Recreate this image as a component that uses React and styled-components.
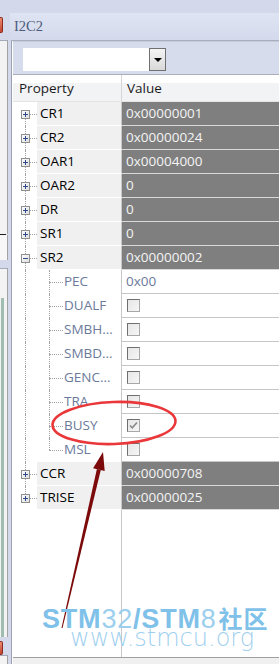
import React from "react";
import styled, { createGlobalStyle, css } from "styled-components";

const GlobalStyle = createGlobalStyle`
  *, *::before, *::after { box-sizing: border-box; }
  html, body { margin: 0; padding: 0; background: #d3d9ea; }
  body { font-family: "Open Sans", "Noto Sans", sans-serif; }
`;

const registers = [
  { name: "CR1", value: "0x00000001" },
  { name: "CR2", value: "0x00000024" },
  { name: "OAR1", value: "0x00004000" },
  { name: "OAR2", value: "0" },
  { name: "DR", value: "0" },
  { name: "SR1", value: "0" },
  {
    name: "SR2",
    value: "0x00000002",
    open: true,
    fields: [
      { name: "PEC", value: "0x00" },
      { name: "DUALF", check: false },
      { name: "SMBH…", check: false },
      { name: "SMBD…", check: false },
      { name: "GENC…", check: false },
      { name: "TRA", check: false },
      { name: "BUSY", check: true },
      { name: "MSL", check: false },
    ],
  },
  { name: "CCR", value: "0x00000708" },
  { name: "TRISE", value: "0x00000025" },
];

const Expander = ({ open }) => (
  <ExpanderBox width="9" height="9" viewBox="0 0 9 9">
    <defs>
      <linearGradient id="exg" x1="0" y1="0" x2="1" y2="1">
        <stop offset="0" stopColor="#ffffff" />
        <stop offset="1" stopColor="#dcdcdc" />
      </linearGradient>
    </defs>
    <rect x="0.5" y="0.5" width="8" height="8" fill="url(#exg)" stroke="#8e8f8f" />
    <path d="M2 4.5H7" stroke="#2d4a8a" />
    {!open && <path d="M4.5 2V7" stroke="#2d4a8a" />}
  </ExpanderBox>
);

const CheckBox = ({ checked }) => (
  <Check>
    {checked && (
      <svg width="11" height="11" viewBox="0 0 11 11">
        <path d="M2 5.5l2.3 2.4L9 2.5" fill="none" stroke="#8a8a8a" strokeWidth="1.6" />
      </svg>
    )}
  </Check>
);

const RegisterRows = () => {
  const rows = [];
  registers.forEach((reg, i) => {
    const first = i === 0;
    const last = i === registers.length - 1;
    rows.push(
      <Row key={reg.name}>
        <TreeCell $first={first} $last={last} $branch>
          <Expander open={reg.open} />
        </TreeCell>
        <NameCell>{reg.name}</NameCell>
        <ValueCell $dark>{reg.value}</ValueCell>
      </Row>
    );
    if (reg.open) {
      reg.fields.forEach((f, j) => {
        rows.push(
          <Row key={reg.name + f.name}>
            <TreeCell />
            <NameCell $child $last={j === reg.fields.length - 1}>
              {f.name}
            </NameCell>
            <ValueCell>
              {f.value !== undefined ? f.value : <CheckBox checked={f.check} />}
            </ValueCell>
          </Row>
        );
      });
    }
  });
  return rows;
};

const App = () => {
  return (
    <Page>
      <GlobalStyle />
      <SideRail>
        <RailGap $h={17} />
        <RailTab $h={16} />
        <RailGap $h={7} />
        <RailPanel $h={194} />
        <RailRule />
        <RailPanel $h={25} $plain />
        <RailGap $h={8} />
        <RailPanel $grow>
          <GreenStrip />
        </RailPanel>
        <RailGap $h={4} />
        <RailTab $h={14} />
        <RailPanel $h={9} />
      </SideRail>

      <Main>
        <TitleBar>I2C2</TitleBar>
        <Panel>
          <Toolbar>
            <Combo>
              <ComboField />
              <ComboButton>
                <svg width="8" height="4" viewBox="0 0 8 4">
                  <path d="M0 0h8L4 4z" fill="#000" />
                </svg>
              </ComboButton>
            </Combo>
          </Toolbar>
          <Grid>
            <HeaderRow>
              <HeaderCell $first>Property</HeaderCell>
              <HeaderCell>Value</HeaderCell>
            </HeaderRow>
            <RegisterRows />
            <Filler>
              <FillName />
              <FillValue />
            </Filler>
          </Grid>
          <StatusBar />
        </Panel>
      </Main>

      <Annotation width="279" height="664" viewBox="0 0 279 664">
        <ellipse
          cx="114"
          cy="423"
          rx="61.5"
          ry="21"
          transform="rotate(-2 114 423)"
          fill="none"
          stroke="#e9373a"
          strokeWidth="2.6"
        />
        <polygon points="61.5,627.9 62.5,628.1 100.8,469.9 96.9,469" fill="#7c0a0a" />
        <polygon points="103,452 104.7,470.9 93.1,468.2" fill="#7c0a0a" />
      </Annotation>

      <Watermark>
        <LogoLine>
          <Bold>STM</Bold>
          <Thin>32</Thin>
          <Bold>/STM</Bold>
          <Thin>8</Thin>
          <Cjk>社区</Cjk>
        </LogoLine>
        <UrlLine>www.stmcu.org</UrlLine>
      </Watermark>
    </Page>
  );
};

const Page = styled.div`
  position: relative;
  width: 279px;
  height: 664px;
  display: flex;
  overflow: hidden;
  background: #d3d9ea;
`;

const SideRail = styled.div`
  flex: 0 0 10px;
  display: flex;
  flex-direction: column;
`;

const RailGap = styled.div`
  flex: 0 0 ${(p) => p.$h}px;
`;

const RailTab = styled.div`
  flex: 0 0 ${(p) => p.$h}px;
  width: 3px;
  background: linear-gradient(to bottom, #e98a70, #c4432f);
  border: 1px solid #8c2a1e;
  border-left: none;
  border-radius: 0 2px 2px 0;
`;

const RailPanel = styled.div`
  ${(p) => (p.$grow ? "flex: 1;" : `flex: 0 0 ${p.$h}px;`)}
  width: 8px;
  display: flex;
  flex-direction: column;
  background: ${(p) => (p.$plain ? "#f7f7f7" : "#f3f3f3")};
  border-top: ${(p) => (p.$plain ? "none" : "1px solid #a4aab8")};
  border-right: 1px solid #a3a3a3;
`;

const RailRule = styled.div`
  flex: 0 0 1px;
  width: 6px;
  background: #1d1d1d;
`;

const GreenStrip = styled.div`
  flex: 1;
  width: 3px;
  margin: 29px 0 0 1px;
  background: #a0bdb0;
`;

const Main = styled.div`
  flex: 1;
  display: flex;
  flex-direction: column;
  padding-top: 13px;
  min-width: 0;
`;

const TitleBar = styled.div`
  flex: 0 0 27px;
  padding-left: 4px;
  line-height: 27px;
  font-family: "Liberation Serif", "DejaVu Serif", serif;
  font-size: 14.5px;
  color: #4c5a7b;
  background: linear-gradient(to bottom, #dee4f2, #d4daec);
`;

const Panel = styled.div`
  flex: 1;
  display: flex;
  flex-direction: column;
  margin-left: 1px;
  padding-left: 1px;
  background: #fff;
  border-left: 1px solid #9aa1b3;
  border-top: 1px solid #a8aebe;
  min-height: 0;
`;

const Toolbar = styled.div`
  flex: 0 0 34px;
  padding: 6px 0 0 10px;
  background: #d6dcec;
  border-top: 1px solid #c5cad8;
  border-bottom: 1px solid #a9aebb;
`;

const Combo = styled.div`
  display: flex;
  height: 23px;
  width: 143px;
`;

const ComboField = styled.div`
  flex: 0 0 126px;
  background: #fff;
`;

const ComboButton = styled.div`
  flex: 0 0 17px;
  display: flex;
  align-items: center;
  justify-content: center;
  border: 1px solid #707070;
  background: linear-gradient(to bottom, #f4f4f4, #d9d9d9);
`;

const Grid = styled.div`
  flex: 1;
  display: flex;
  flex-direction: column;
  font-size: 13.5px;
  min-height: 0;
`;

const HeaderRow = styled.div`
  flex: 0 0 27px;
  display: flex;
  border-bottom: 1px solid #e4e4e4;
  background: linear-gradient(to bottom, #ffffff 0, #ffffff 30%, #f2f3f5 31%, #f2f3f5 100%);
  color: #1b1b1b;
`;

const HeaderCell = styled.div`
  display: flex;
  align-items: center;
  ${(p) =>
    p.$first
      ? css`
          flex: 0 0 109px;
          padding-left: 6px;
          border-right: 1px solid #d6d6d6;
        `
      : css`
          flex: 1;
          padding-left: 5px;
        `}
`;

const Row = styled.div`
  flex: 0 0 24px;
  display: flex;
  line-height: 1;
`;

const dotted = "1px dotted #a2a2a2";

const TreeCell = styled.div`
  position: relative;
  flex: 0 0 24px;
  display: flex;
  align-items: center;
  padding-left: 8px;
  background: #fff;

  &::before {
    content: "";
    position: absolute;
    left: 12px;
    top: ${(p) => (p.$first ? "50%" : "0")};
    bottom: ${(p) => (p.$last ? "50%" : "0")};
    border-left: ${dotted};
  }

  &::after {
    content: "";
    display: ${(p) => (p.$branch ? "block" : "none")};
    position: absolute;
    left: 17px;
    right: 0;
    top: 50%;
    border-top: ${dotted};
  }
`;

const ExpanderBox = styled.svg`
  position: relative;
  z-index: 1;
  display: block;
`;

const NameCell = styled.div`
  position: relative;
  flex: 0 0 85px;
  display: flex;
  align-items: center;
  white-space: nowrap;
  overflow: hidden;
  border-right: 1px solid #c8c8c8;

  ${(p) =>
    p.$child
      ? css`
          padding: 0 0 1px 27px;
          color: #6b7a9b;
          background: #fff;

          &::before {
            content: "";
            position: absolute;
            left: 12px;
            top: 0;
            bottom: ${p.$last ? "50%" : "0"};
            border-left: ${dotted};
          }

          &::after {
            content: "";
            position: absolute;
            left: 12px;
            width: 14px;
            top: 50%;
            border-top: ${dotted};
          }
        `
      : css`
          padding-left: 3px;
          color: #000;
          background: #f0f0f0;
          border-bottom: 1px solid #ffffff;
        `}
`;

const ValueCell = styled.div`
  flex: 1;
  display: flex;
  align-items: center;
  padding-left: 4px;
  white-space: nowrap;

  ${(p) =>
    p.$dark
      ? css`
          background: #7f7f7f;
          color: #f4f4f4;
          border-bottom: 1px solid #d9d9d9;
        `
      : css`
          background: #fff;
          color: #6b7a9b;
          border-bottom: 1px solid #c6c6c6;
        `}
`;

const Check = styled.span`
  display: flex;
  align-items: center;
  justify-content: center;
  width: 13px;
  height: 13px;
  margin-left: 1px;
  background: linear-gradient(135deg, #e6e6e6, #f6f6f6);
  border: 1px solid #a8a8a8;
  border-top-color: #6f6f6f;
  border-left-color: #6f6f6f;
`;

const Filler = styled.div`
  flex: 1;
  display: flex;
`;

const FillName = styled.div`
  flex: 0 0 109px;
  border-right: 1px solid #c8c8c8;
`;

const FillValue = styled.div`
  flex: 1;
`;

const StatusBar = styled.div`
  flex: 0 0 7px;
  background: #f0f0f0;
  border-top: 1px solid #a0a0a0;
`;

const Annotation = styled.svg`
  position: absolute;
  left: 0;
  top: 0;
  pointer-events: none;
`;

const Watermark = styled.div`
  position: absolute;
  left: 42px;
  top: 607px;
  pointer-events: none;
`;

const LogoLine = styled.div`
  height: 22px;
  line-height: 22px;
  font-size: 27px;
  font-family: "Liberation Sans", Arial, sans-serif;
  letter-spacing: 0.8px;
  white-space: nowrap;
`;

const Bold = styled.span`
  font-weight: 700;
  color: #7fc1e9;
`;

const Thin = styled.span`
  font-weight: 400;
  color: #9ccfee;
`;

const Cjk = styled.span`
  font-family: "Noto Sans CJK SC", sans-serif;
  font-weight: 700;
  font-size: 24px;
  color: #7fc1e9;
  margin-left: 2px;
`;

const UrlLine = styled.div`
  margin-left: 28px;
  height: 18px;
  line-height: 18px;
  font-size: 24px;
  font-family: "DejaVu Sans", sans-serif;
  font-weight: 300;
  color: #9fd0ee;
  white-space: nowrap;
`;

export default App;
